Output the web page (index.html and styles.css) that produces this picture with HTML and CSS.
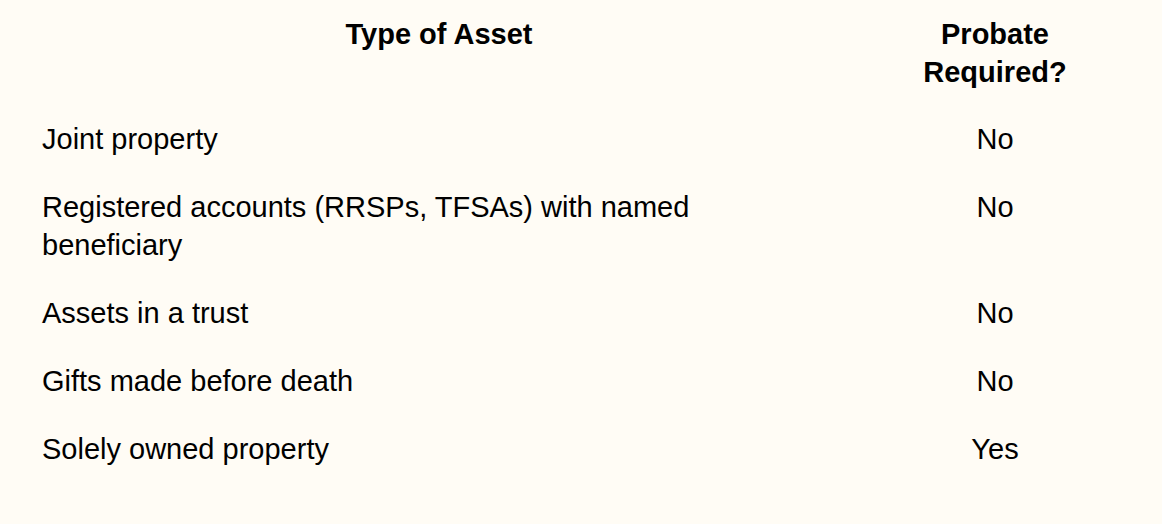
FILE: index.html
```html
<!DOCTYPE html>
<html lang="en">
<head>
<meta charset="utf-8">
<title>Probate Table</title>
<link rel="stylesheet" href="styles.css">
</head>
<body>
<table class="probate">
  <colgroup>
    <col class="c-asset">
    <col class="c-probate">
  </colgroup>
  <thead>
    <tr>
      <th>Type of Asset</th>
      <th class="probate-head">Probate Required?</th>
    </tr>
  </thead>
  <tbody>
    <tr><td class="asset">Joint property</td><td class="answer">No</td></tr>
    <tr><td class="asset">Registered accounts (RRSPs, TFSAs) with named beneficiary</td><td class="answer">No</td></tr>
    <tr><td class="asset">Assets in a trust</td><td class="answer">No</td></tr>
    <tr><td class="asset">Gifts made before death</td><td class="answer">No</td></tr>
    <tr><td class="asset">Solely owned property</td><td class="answer">Yes</td></tr>
  </tbody>
</table>
</body>
</html>
```
FILE: styles.css
```css
html, body {
  margin: 0;
  padding: 0;
  background: #fffcf5;
}
body {
  font-family: "Liberation Sans", Arial, sans-serif;
  color: #000;
}
.probate {
  border-collapse: collapse;
  table-layout: fixed;
  margin-left: 27px;
  width: 1112px;
  font-size: 29px;
  line-height: 38px;
}
.c-asset { width: 824px; }
.c-probate { width: 288px; }
.probate th,
.probate td {
  padding: 15px;
  vertical-align: top;
}
.probate th {
  font-weight: bold;
  text-align: center;
  padding-top: 15px;
  padding-bottom: 14px;
}
.probate .probate-head {
  padding-left: 20px;
  padding-right: 20px;
}
.probate td.asset {
  text-align: left;
  padding-right: 45px;
}
.probate td.answer {
  text-align: center;
  padding-left: 20px;
  padding-right: 20px;
}
```
